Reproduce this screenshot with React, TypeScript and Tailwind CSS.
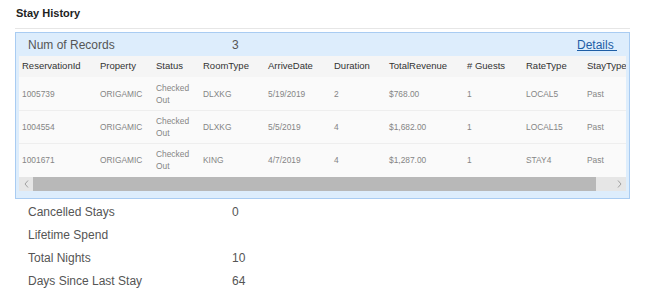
import React from 'react';

interface Stay {
  id: string;
  property: string;
  status: string;
  roomType: string;
  arrive: string;
  duration: string;
  revenue: string;
  guests: string;
  rateType: string;
  stayType: string;
}

const stays: Stay[] = [
  { id: '1005739', property: 'ORIGAMIC', status: 'Checked Out', roomType: 'DLXKG', arrive: '5/19/2019', duration: '2', revenue: '$768.00', guests: '1', rateType: 'LOCAL5', stayType: 'Past' },
  { id: '1004554', property: 'ORIGAMIC', status: 'Checked Out', roomType: 'DLXKG', arrive: '5/5/2019', duration: '4', revenue: '$1,682.00', guests: '1', rateType: 'LOCAL15', stayType: 'Past' },
  { id: '1001671', property: 'ORIGAMIC', status: 'Checked Out', roomType: 'KING', arrive: '4/7/2019', duration: '4', revenue: '$1,287.00', guests: '1', rateType: 'STAY4', stayType: 'Past' },
];

const headers = ['ReservationId', 'Property', 'Status', 'RoomType', 'ArriveDate', 'Duration', 'TotalRevenue', '# Guests', 'RateType', 'StayType'];

const cols = 'grid grid-cols-[78px_56px_47px_65px_66px_55px_78px_59px_61px_70px]';

const stats = [
  { label: 'Cancelled Stays', value: '0' },
  { label: 'Lifetime Spend', value: '' },
  { label: 'Total Nights', value: '10' },
  { label: 'Days Since Last Stay', value: '64' },
];

const App: React.FC = () => {
  return (
    <div className="w-[647px] h-[296px] bg-white pl-[15px] font-['Liberation_Sans',Arial,sans-serif]">
      <div className="pt-[6px] pl-[1px] text-[11px] leading-[14px] font-bold text-[#222]">Stay History</div>
      <div className="mt-[8px] w-[615px] border-t border-[#e6e6e6]"></div>

      <div className="mt-[3px] w-[615px] border border-[#a9ccf2] bg-[#ddedfc]">
        <div className="h-[23px] flex items-center text-[12px] text-[#555]">
          <span className="pl-[12px] w-[216px]">Num of Records</span>
          <span className="flex-1">3</span>
          <a href="#details" className="mr-[12px] text-[#1d5ea6] underline">Details&nbsp;</a>
        </div>

        <div className="mx-[3px] overflow-hidden bg-[#fafafa]">
          <div className={`${cols} h-[21px] items-center bg-[#f5f5f5] text-[9.5px] text-[#333] whitespace-nowrap`}>
            {headers.map((h) => (
              <div key={h} className="pl-[3px]">{h}</div>
            ))}
          </div>
          {stays.map((s, i) => (
            <div
              key={s.id}
              className={`${cols} h-[33px] items-center text-[8.4px] leading-[12px] text-[#858585] whitespace-nowrap ${i > 0 ? 'border-t border-[#eeeeee]' : ''}`}
            >
              <div className="pl-[3px]">{s.id}</div>
              <div className="pl-[3px]">{s.property}</div>
              <div className="pl-[3px] whitespace-normal w-[40px]">{s.status}</div>
              <div className="pl-[3px]">{s.roomType}</div>
              <div className="pl-[3px]">{s.arrive}</div>
              <div className="pl-[3px]">{s.duration}</div>
              <div className="pl-[3px]">{s.revenue}</div>
              <div className="pl-[3px]">{s.guests}</div>
              <div className="pl-[3px]">{s.rateType}</div>
              <div className="pl-[3px]">{s.stayType}</div>
            </div>
          ))}
          <div className="flex h-[14px] mt-[1px]">
            <div className="w-[14px] bg-[#e6e6e6] flex items-center justify-center">
              <svg width="5" height="8" viewBox="0 0 5 8">
                <polyline points="4,0.5 1,4 4,7.5" fill="none" stroke="#a0a0a0" strokeWidth="1" />
              </svg>
            </div>
            <div className="w-[563px] bg-[#b8b8b8]"></div>
            <div className="flex-1 bg-[#e6e6e6] flex items-center justify-end pr-[4px]">
              <svg width="5" height="8" viewBox="0 0 5 8">
                <polyline points="1,0.5 4,4 1,7.5" fill="none" stroke="#a0a0a0" strokeWidth="1" />
              </svg>
            </div>
          </div>
        </div>
        <div className="h-[7px]"></div>
      </div>

      <div className="mt-[2px] text-[12px] text-[#555]">
        {stats.map((st) => (
          <div key={st.label} className="flex h-[22.8px] items-center">
            <span className="pl-[13px] w-[217px]">{st.label}</span>
            <span>{st.value}</span>
          </div>
        ))}
      </div>
    </div>
  );
};

export default App;
